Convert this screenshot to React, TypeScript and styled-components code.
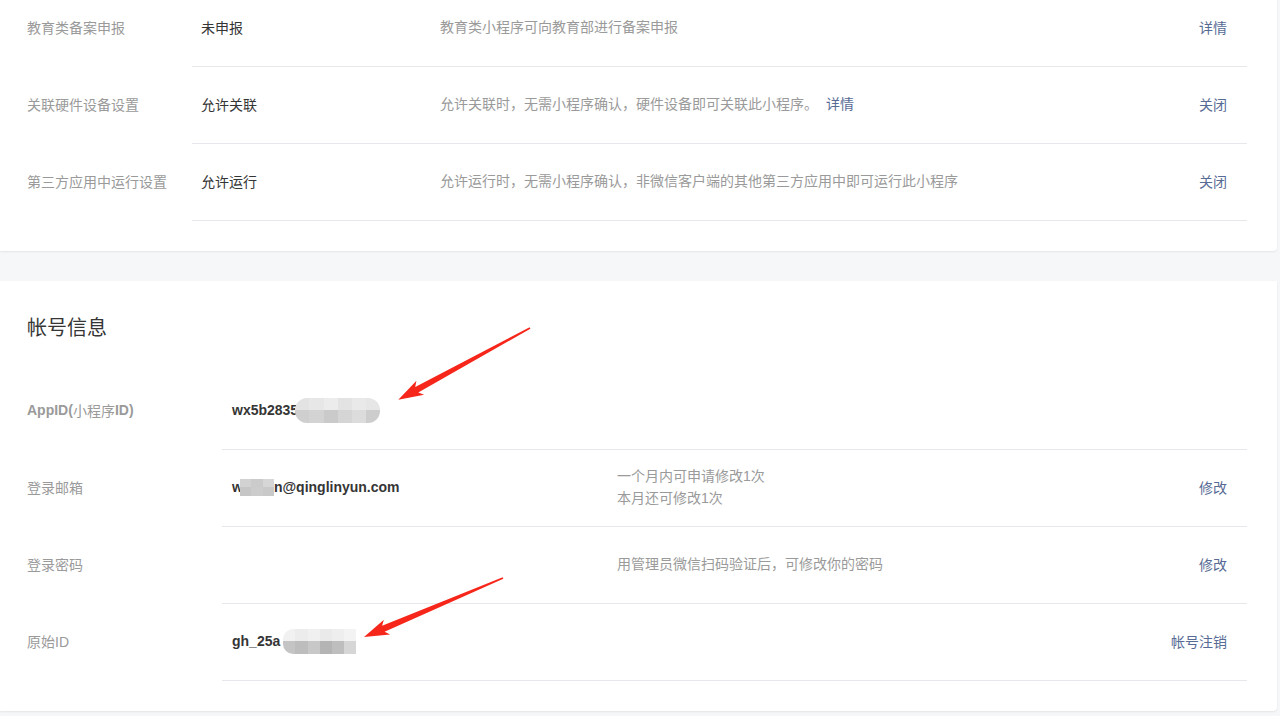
import React from "react";
import styled, { createGlobalStyle } from "styled-components";

const GlobalStyle = createGlobalStyle`
  html, body { margin: 0; padding: 0; }
  body {
    background: #f6f7f9;
    font-family: "Liberation Sans", "Noto Sans CJK SC", sans-serif;
    font-size: 14px;
    color: #353535;
  }
`;

const Shell = styled.div`
  position: relative;
  width: 1280px;
  height: 716px;
  overflow: hidden;
`;

const Page = styled.div`
  width: 1277px;
  margin-top: -10px;
  display: flex;
  flex-direction: column;
  gap: 30px;
`;

const Card = styled.section<{ $top?: number }>`
  background: #fff;
  border-radius: 0 0 4px 0;
  box-shadow: 0 1px 2px rgba(0, 0, 0, 0.08);
  padding: ${(p) => p.$top ?? 0}px 30px 30px 27px;
`;

const Title = styled.h2`
  margin: 0 0 29px;
  font-size: 20px;
  font-weight: normal;
  line-height: 32px;
  color: #353535;
`;

const Row = styled.div<{ $label: number }>`
  display: grid;
  grid-template-columns: ${(p) => p.$label}px 1fr;
  align-items: stretch;
`;

const Label = styled.div`
  display: flex;
  align-items: center;
  padding-bottom: 3px;
  color: #9a9a9a;
  font-size: 14px;
`;

const Strong = styled.b`
  font-weight: bold;
`;

const Content = styled.div<{ $value: number; $pad: number }>`
  display: grid;
  grid-template-columns: ${(p) => p.$value}px 1fr auto;
  align-items: center;
  box-sizing: border-box;
  height: 77px;
  border-bottom: 1px solid #e7e7eb;
  padding: 0 20px 2px ${(p) => p.$pad}px;
`;

const Value = styled.div<{ $bold?: boolean }>`
  display: flex;
  align-items: center;
  color: #353535;
  font-size: 14px;
  font-weight: ${(p) => (p.$bold ? "bold" : "normal")};
  white-space: nowrap;
`;

const Desc = styled.div`
  color: #9a9a9a;
  font-size: 14px;
  line-height: 22px;
`;

const Link = styled.a`
  color: #576b95;
  text-decoration: none;
  font-size: 14px;
  cursor: pointer;
`;

const InlineLink = styled(Link)`
  margin-left: 8px;
`;

const Mosaic = styled.span<{ $w: number; $h: number; $cols: number; $radius: string; $shift: number }>`
  display: inline-grid;
  grid-template-columns: repeat(${(p) => p.$cols}, 1fr);
  grid-template-rows: 1fr 1fr;
  width: ${(p) => p.$w}px;
  height: ${(p) => p.$h}px;
  border-radius: ${(p) => p.$radius};
  overflow: hidden;
  margin-left: ${(p) => p.$shift}px;
`;

const Cell = styled.span<{ $c: string }>`
  background: ${(p) => p.$c};
`;

function Blur({
  w,
  h,
  radius,
  shift = 0,
  top,
  bottom,
}: {
  w: number;
  h: number;
  radius: string;
  shift?: number;
  top: string[];
  bottom: string[];
}) {
  return (
    <Mosaic $w={w} $h={h} $cols={top.length} $radius={radius} $shift={shift}>
      {top.map((c, i) => (
        <Cell key={"t" + i} $c={c} />
      ))}
      {bottom.map((c, i) => (
        <Cell key={"b" + i} $c={c} />
      ))}
    </Mosaic>
  );
}

const Overlay = styled.svg`
  position: absolute;
  left: 0;
  top: 0;
  pointer-events: none;
`;

function Arrow({ x, y, len, angle }: { x: number; y: number; len: number; angle: number }) {
  const L = len;
  const pts = `0,-0.8 ${L - 21},-3.2 ${L - 25},-8 ${L},0 ${L - 25},8 ${L - 21},3.2 0,0.8`;
  return <polygon points={pts} fill="#f7261a" transform={`translate(${x} ${y}) rotate(${angle})`} />;
}

const topRows = [
  { label: "教育类备案申报", value: "未申报", desc: "教育类小程序可向教育部进行备案申报", link: null, action: "详情" },
  {
    label: "关联硬件设备设置",
    value: "允许关联",
    desc: "允许关联时，无需小程序确认，硬件设备即可关联此小程序。",
    link: "详情",
    action: "关闭",
  },
  {
    label: "第三方应用中运行设置",
    value: "允许运行",
    desc: "允许运行时，无需小程序确认，非微信客户端的其他第三方应用中即可运行此小程序",
    link: null,
    action: "关闭",
  },
];

export default function App() {
  return (
    <Shell>
      <GlobalStyle />
      <Page>
        <Card>
          {topRows.map((r) => (
            <Row key={r.label} $label={165}>
              <Label>{r.label}</Label>
              <Content $value={239} $pad={9}>
                <Value>{r.value}</Value>
                <Desc>
                  {r.desc}
                  {r.link && <InlineLink>{r.link}</InlineLink>}
                </Desc>
                <Link>{r.action}</Link>
              </Content>
            </Row>
          ))}
        </Card>

        <Card $top={31}>
          <Title>帐号信息</Title>
          <Row $label={195}>
            <Label>
              <Strong>AppID(</Strong>小程序<Strong>ID)</Strong>
            </Label>
            <Content $value={385} $pad={10}>
              <Value $bold>
                wx5b2835
                <Blur
                  w={85}
                  h={25}
                  radius="12px"
                  shift={-3}
                  top={["#e3e3e3", "#e7e7e7", "#ececec", "#e3e3e3", "#e9e9e9", "#e6e6e6"]}
                  bottom={["#cfcfcf", "#d3d3d3", "#cacaca", "#d5d5d5", "#dcdcdc", "#cdcdcd"]}
                />
              </Value>
              <Desc />
              <span />
            </Content>
          </Row>
          <Row $label={195}>
            <Label>登录邮箱</Label>
            <Content $value={385} $pad={10}>
              <Value $bold>
                w
                <Blur
                  w={34}
                  h={17}
                  radius="0"
                  shift={-3}
                  top={["#d2d2d2", "#cbcbcb", "#d6d6d6"]}
                  bottom={["#c6c6c6", "#cccccc", "#c9c9c9"]}
                />
                n@qinglinyun.com
              </Value>
              <Desc>
                一个月内可申请修改1次
                <br />
                本月还可修改1次
              </Desc>
              <Link>修改</Link>
            </Content>
          </Row>
          <Row $label={195}>
            <Label>登录密码</Label>
            <Content $value={385} $pad={10}>
              <Value />
              <Desc>用管理员微信扫码验证后，可修改你的密码</Desc>
              <Link>修改</Link>
            </Content>
          </Row>
          <Row $label={195}>
            <Label>原始ID</Label>
            <Content $value={385} $pad={10}>
              <Value $bold>
                gh_25a
                <Blur
                  w={73}
                  h={25}
                  radius="10px 0 0 10px"
                  shift={3}
                  top={["#f1f1f1", "#ececec", "#f0f0f0", "#eaeaea", "#eeeeee", "#f3f3f3"]}
                  bottom={["#c4c4c4", "#bdbdbd", "#c8c8c8", "#b4b4b4", "#bebebe", "#d6d6d6"]}
                />
              </Value>
              <Desc />
              <Link>帐号注销</Link>
            </Content>
          </Row>
        </Card>
      </Page>
      <Overlay width={1280} height={716} viewBox="0 0 1280 716">
        <Arrow x={530} y={328} len={150} angle={151.4} />
        <Arrow x={503} y={578} len={151} angle={157} />
      </Overlay>
    </Shell>
  );
}
